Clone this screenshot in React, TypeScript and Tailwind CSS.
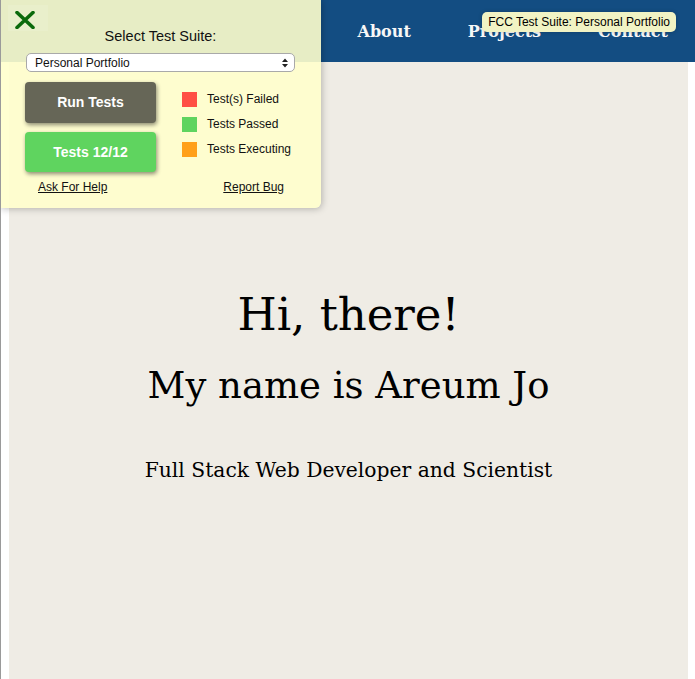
import React from "react";

function CloseIcon() {
  return (
    <svg width="20" height="18" viewBox="0 0 20 18" className="block">
      <path
        d="M2 1.5 L18 16.5 M18 1.5 L2 16.5"
        stroke="#0b6a0b"
        strokeWidth="3.6"
        strokeLinecap="round"
      />
    </svg>
  );
}

function SelectArrows() {
  return (
    <svg width="6" height="10" viewBox="0 0 6 10" className="block">
      <path d="M0 4 L3 0.5 L6 4 Z M0 6 L3 9.5 L6 6 Z" fill="#222" />
    </svg>
  );
}

function TestPanel() {
  const legend = [
    { label: "Test(s) Failed", color: "bg-[#ff4f45]" },
    { label: "Tests Passed", color: "bg-[#5fd45f]" },
    { label: "Tests Executing", color: "bg-[#ffa01a]" },
  ];

  return (
    <div className="absolute left-[-1px] top-0 z-20 h-[208px] w-[321px] rounded-br-[6px] bg-[rgba(255,255,204,0.9)] font-['Liberation_Sans',Arial,sans-serif] text-[#111] shadow-[1px_1px_7px_rgba(0,0,0,0.25)]">
      <div className="absolute left-[8px] top-[5px] h-[26px] w-[40px] bg-white/10" />
      <div className="absolute left-[15px] top-[11px]">
        <CloseIcon />
      </div>

      <div className="pt-[28px] text-center text-[14.5px] leading-[17px]">
        Select Test Suite:
      </div>

      <div className="mx-[26px] mt-[8px] flex h-[19px] items-center justify-between rounded-[5px] border border-[#a9a9a9] bg-white pl-[8px] pr-[6px] text-[12px] leading-none">
        <span>Personal Portfolio</span>
        <SelectArrows />
      </div>

      <div className="mt-[10px] flex pl-[25px]">
        <div className="flex w-[131px] flex-col gap-[9px]">
          <button className="h-[41px] rounded-[4px] bg-[#666657] text-[14px] font-bold text-white shadow-[1px_2px_4px_rgba(0,0,0,0.45)]">
            Run Tests
          </button>
          <button className="h-[40px] rounded-[4px] bg-[#5fd45f] text-[14px] font-bold text-white shadow-[1px_2px_4px_rgba(0,0,0,0.45)]">
            Tests 12/12
          </button>
        </div>
        <div className="ml-[26px] flex flex-col gap-[10px] pt-[10px]">
          {legend.map((item) => (
            <div key={item.label} className="flex items-center gap-[10px]">
              <span className={`block h-[15px] w-[15px] ${item.color}`} />
              <span className="text-[12px] leading-[15px]">{item.label}</span>
            </div>
          ))}
        </div>
      </div>

      <div className="mt-[8px] flex justify-between pl-[38px] pr-[37px] text-[12px] leading-[14px]">
        <a className="underline">Ask For Help</a>
        <a className="underline">Report Bug</a>
      </div>
    </div>
  );
}

export default function App() {
  const links = ["About", "Projects", "Contact"];

  return (
    <div className="relative h-[679px] w-[695px] overflow-hidden border-l border-[#9a9a9a] bg-white">
      <TestPanel />

      <div className="absolute right-[19px] top-[12px] z-30 rounded-[5px] bg-[#f1f3c4] px-[6px] py-[3px] font-['Liberation_Sans',Arial,sans-serif] text-[12px] leading-[14px] text-black shadow-[0_0_4px_rgba(0,0,0,0.2)]">
        FCC Test Suite: Personal Portfolio
      </div>

      <nav className="flex h-[62px] items-center justify-end gap-[57px] bg-[#134d82] pt-[2px] pr-[27px] font-['DejaVu_Serif',serif] text-[16px] font-bold text-[#f7f7f7]">
        {links.map((l) => (
          <a key={l}>{l}</a>
        ))}
      </nav>

      <section className="ml-[8px] mr-[7px] h-[617px] bg-[#efece5] pt-[225px] text-center font-['DejaVu_Serif',serif] text-black">
        <h1 className="text-[45px] leading-[56px]">Hi, there!</h1>
        <h2 className="mt-[20px] text-[37px] leading-[46px]">My name is Areum Jo</h2>
        <p className="mt-[48px] text-[20.3px] leading-[26px]">
          Full Stack Web Developer and Scientist
        </p>
      </section>
    </div>
  );
}
